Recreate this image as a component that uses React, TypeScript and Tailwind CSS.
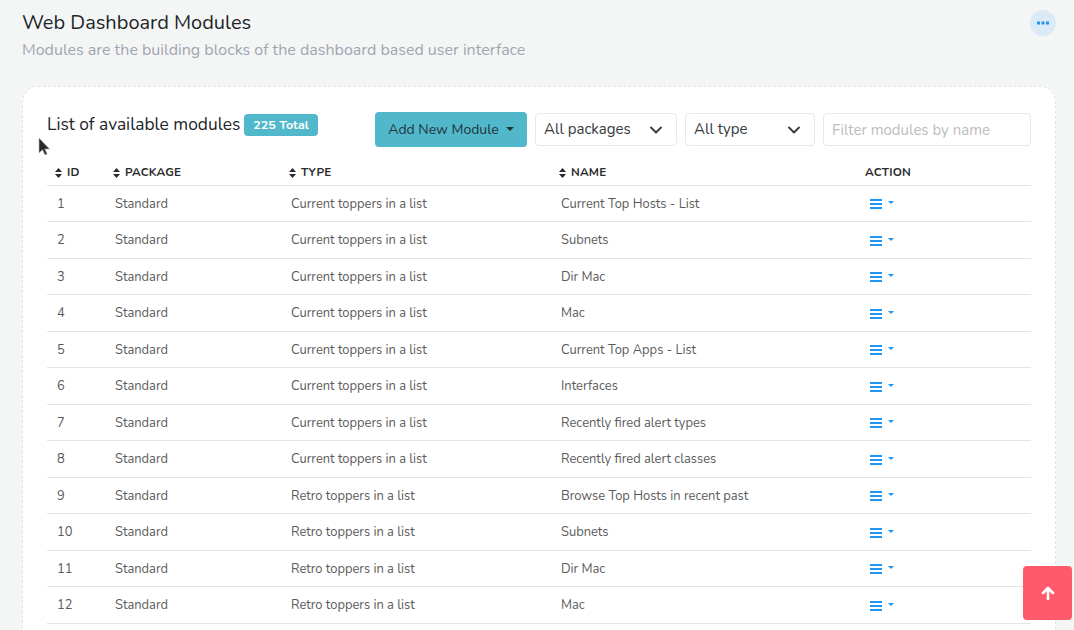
import React from "react";

const rows: [number, string, string][] = [
  [1, "Current toppers in a list", "Current Top Hosts - List"],
  [2, "Current toppers in a list", "Subnets"],
  [3, "Current toppers in a list", "Dir Mac"],
  [4, "Current toppers in a list", "Mac"],
  [5, "Current toppers in a list", "Current Top Apps - List"],
  [6, "Current toppers in a list", "Interfaces"],
  [7, "Current toppers in a list", "Recently fired alert types"],
  [8, "Current toppers in a list", "Recently fired alert classes"],
  [9, "Retro toppers in a list", "Browse Top Hosts in recent past"],
  [10, "Retro toppers in a list", "Subnets"],
  [11, "Retro toppers in a list", "Dir Mac"],
  [12, "Retro toppers in a list", "Mac"],
];

function SortIcon() {
  return (
    <svg width="7" height="10" viewBox="0 0 7 10" className="mr-[5px] shrink-0" fill="#2b2b2b">
      <path d="M3.5 0 L7 4 H0 Z" />
      <path d="M3.5 10 L0 6 H7 Z" />
    </svg>
  );
}

function Chevron() {
  return (
    <svg width="12" height="8" viewBox="0 0 12 8" fill="none" stroke="#343a40" strokeWidth="1.8" strokeLinecap="round" strokeLinejoin="round">
      <path d="M1 1.5 L6 6.5 L11 1.5" />
    </svg>
  );
}

function Select({ label, width }: { label: string; width: string }) {
  return (
    <div className={`${width} h-[33px] flex items-center justify-between pl-[8px] pr-[14px] border border-[#e8e8e4] rounded-[4px] bg-white text-[15px] text-[#343a40]`}>
      <span>{label}</span>
      <Chevron />
    </div>
  );
}

function Th({ label, width, sort = true }: { label: string; width: string; sort?: boolean }) {
  return (
    <th className={`${width} h-[27px] pl-[8px] pt-[4px] pr-0 pb-0 text-left border-b border-[#e4e4e2] align-middle`}>
      <span className="flex items-center text-[11.7px] font-bold text-[#2b2b2b] tracking-[0.2px]">
        {sort && <SortIcon />}
        {label}
      </span>
    </th>
  );
}

function ActionIcon() {
  return (
    <span className="flex items-center gap-[6px] pl-[3px]">
      <svg width="12" height="10" viewBox="0 0 12 10" fill="#2196f3">
        <rect x="0" y="0" width="12" height="2" />
        <rect x="0" y="4" width="12" height="2" />
        <rect x="0" y="8" width="12" height="2" />
      </svg>
      <svg width="6" height="3" viewBox="0 0 6 3" fill="#2196f3" className="mb-[3px]">
        <path d="M0 0 H6 L3 3 Z" />
      </svg>
    </span>
  );
}

export default function App() {
  return (
    <div className="relative h-[630px] overflow-hidden bg-[#f4f6f6] pl-[22px] pr-[18px] font-['Nunito','Noto_Sans',sans-serif]">
      <header className="flex justify-between pt-[10px]">
        <div>
          <h1 className="text-[20px] leading-[26px] font-normal text-[#212529]">Web Dashboard Modules</h1>
          <p className="mt-[2px] text-[16px] leading-[24px] text-[#a1a5b0]">
            Modules are the building blocks of the dashboard based user interface
          </p>
        </div>
        <button className="flex h-[26px] w-[26px] items-center justify-center rounded-full bg-[#dce9f7]">
          <svg width="12" height="4" viewBox="0 0 12 4" fill="#2196f3">
            <rect x="0" y="0.5" width="3" height="3" />
            <rect x="4.5" y="0.5" width="3" height="3" />
            <rect x="9" y="0.5" width="3" height="3" />
          </svg>
        </button>
      </header>

      <section className="mt-[24px] rounded-[16px] border border-dashed border-[#e2e4e4] bg-white px-[24px] pt-[24px] pb-[40px]">
        <div className="flex items-start justify-between">
          <div className="flex items-start">
            <h2 className="text-[17.35px] leading-[26px] font-normal text-[#212529]">List of available modules</h2>
            <span className="mt-[3px] ml-[4px] rounded-[4px] bg-[#50b8ca] px-[9px] py-[3px] text-[12.5px] leading-[16px] font-bold text-white">
              225 Total
            </span>
          </div>
          <div className="flex items-start gap-[8px] pt-[1px]">
            <button className="flex h-[35px] w-[152px] items-center justify-center gap-[7px] rounded-[4px] bg-[#50b8ca] text-[14px] text-[#25333b]">
              Add New Module
              <svg width="8" height="4" viewBox="0 0 8 4" fill="#25333b" className="mb-[1px]">
                <path d="M0 0 H8 L4 4 Z" />
              </svg>
            </button>
            <div className="pt-[1px]">
              <Select label="All packages" width="w-[142px]" />
            </div>
            <div className="pt-[1px]">
              <Select label="All type" width="w-[130px]" />
            </div>
            <div className="pt-[1px]">
              <input
                readOnly
                placeholder="Filter modules by name"
                className="h-[33px] w-[208px] rounded-[4px] border border-[#e8e8e4] bg-white px-[8px] text-[15px] placeholder:text-[#bdbdbd] outline-none"
              />
            </div>
          </div>
        </div>

        <table className="mt-[11px] w-[984px] table-fixed border-collapse">
          <thead>
            <tr>
              <Th label="ID" width="w-[58px]" />
              <Th label="PACKAGE" width="w-[176px]" />
              <Th label="TYPE" width="w-[270px]" />
              <Th label="NAME" width="w-[306px]" />
              <Th label="ACTION" width="w-[174px]" sort={false} />
            </tr>
          </thead>
          <tbody>
            {rows.map(([id, type, name]) => (
              <tr key={id} className="h-[36.5px] border-b border-[#e4e4e2] text-[12.9px] text-[#5a5a5a]">
                <td className="pl-[10px] pt-[2px]">{id}</td>
                <td className="pl-[10px] pt-[2px]">Standard</td>
                <td className="pl-[10px] pt-[2px]">{type}</td>
                <td className="pl-[10px] pt-[2px]">{name}</td>
                <td className="pl-[10px] pt-[2px]">
                  <ActionIcon />
                </td>
              </tr>
            ))}
          </tbody>
        </table>
      </section>

      <svg width="14" height="20" viewBox="0 0 14 20" className="absolute left-[38px] top-[137px]">
        <path d="M1 1 L1 16 L4.5 12.8 L7 18 L9.2 17 L6.8 12 L11.5 12 Z" fill="#2a2a2a" stroke="#bbbbbb" strokeWidth="0.6" />
      </svg>

      <button className="absolute left-[1023px] top-[566px] flex h-[54px] w-[49px] items-center justify-center rounded-[4px] bg-[#ff5a6b]">
        <svg width="14" height="14" viewBox="0 0 14 14" fill="none" stroke="white" strokeWidth="2.6" strokeLinejoin="round" strokeLinecap="round">
          <path d="M7 13 V2 M2 7 L7 2 L12 7" />
        </svg>
      </button>
    </div>
  );
}
